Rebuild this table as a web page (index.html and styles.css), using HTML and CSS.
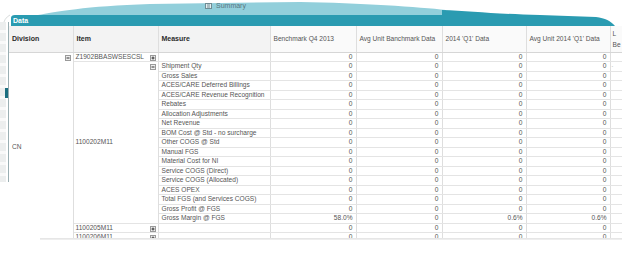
FILE: index.html
```html
<!DOCTYPE html>
<html>
<head>
<meta charset="utf-8">
<link rel="stylesheet" href="styles.css">
</head>
<body>
<div class="page">
  <div class="top">
    <svg class="curl" width="628" height="26" viewBox="0 0 628 26">
      <path class="band-light" d="M38 15 C55 12 85 6 150 4 L300 2 C360 3 420 7 446 10 L446 15 Z"/>
      <path class="band-dark" d="M11 26 L11 18 Q11 15 15 15 L442 15 L442 10 C470 11 495 14 540 15 L596 17 C605 18 611 21 615 26 Z"/>
      <path class="edge-curve" d="M3 26 Q4 18 10 15" />
    </svg>
    <div class="top-text">
      <div class="summary">
        <svg class="tab-ico" width="7" height="6" viewBox="0 0 7 6"><rect x="0.5" y="0.5" width="6" height="5" fill="#e4eef0" stroke="#6f8c93"/><path d="M2 2h3M2 4h3" stroke="#6f8c93"/></svg>
        <span>Summary</span>
      </div>
      <div class="data-title">Data</div>
    </div>
  </div>

  <div class="body">
    <div class="edge">
      <div class="edge-rail"><div class="edge-tab"></div></div>
    </div>
    <div class="clip">
      <table class="pivot">
        <colgroup>
          <col class="c-div"><col class="c-item"><col class="c-meas">
          <col class="c-v1"><col class="c-v2"><col class="c-v3"><col class="c-v4"><col class="c-x">
        </colgroup>
        <thead>
          <tr class="head">
            <th class="dim">Division</th>
            <th class="dim">Item</th>
            <th class="dim">Measure</th>
            <th class="expr">Benchmark Q4 2013</th>
            <th class="expr">Avg Unit Banchmark Data</th>
            <th class="expr">2014 'Q1' Data</th>
            <th class="expr">Avg Unit 2014 'Q1' Data</th>
            <th class="expr extra">L<br>Be</th>
          </tr>
        </thead>
        <tbody>
          <tr>
            <td class="division" rowspan="20"><span class="ico ico-min"><svg width="6" height="6" viewBox="0 0 6 6"><rect x="0.5" y="0.5" width="5" height="5" fill="#eee" stroke="#9a9a9a"/><path d="M1.5 3h3" stroke="#333"/></svg></span>CN</td>
            <td class="item"><span class="ico"><svg width="6" height="6" viewBox="0 0 6 6"><rect x="0.5" y="0.5" width="5" height="5" fill="#eee" stroke="#9a9a9a"/><path d="M1.5 3h3M3 1.5v3" stroke="#333"/></svg></span>Z1902BBASWSESCSL</td>
            <td class="meas"></td>
            <td class="num">0</td><td class="num">0</td><td class="num">0</td><td class="num">0</td><td class="x"></td>
          </tr>
          <tr>
            <td class="item" rowspan="17"><span class="ico"><svg width="6" height="6" viewBox="0 0 6 6"><rect x="0.5" y="0.5" width="5" height="5" fill="#eee" stroke="#9a9a9a"/><path d="M1.5 3h3" stroke="#333"/></svg></span>1100202M11</td>
            <td class="meas">Shipment Qty</td>
            <td class="num">0</td><td class="num">0</td><td class="num">0</td><td class="num">0</td><td class="x"><span class="dash">-</span></td>
          </tr>
          <tr><td class="meas">Gross Sales</td><td class="num">0</td><td class="num">0</td><td class="num">0</td><td class="num">0</td><td class="x"></td></tr>
          <tr><td class="meas">ACES/CARE Deferred Billings</td><td class="num">0</td><td class="num">0</td><td class="num">0</td><td class="num">0</td><td class="x"></td></tr>
          <tr><td class="meas">ACES/CARE Revenue Recognition</td><td class="num">0</td><td class="num">0</td><td class="num">0</td><td class="num">0</td><td class="x"></td></tr>
          <tr><td class="meas">Rebates</td><td class="num">0</td><td class="num">0</td><td class="num">0</td><td class="num">0</td><td class="x"></td></tr>
          <tr><td class="meas">Allocation Adjustments</td><td class="num">0</td><td class="num">0</td><td class="num">0</td><td class="num">0</td><td class="x"></td></tr>
          <tr><td class="meas">Net Revenue</td><td class="num">0</td><td class="num">0</td><td class="num">0</td><td class="num">0</td><td class="x"></td></tr>
          <tr><td class="meas">BOM Cost @ Std - no surcharge</td><td class="num">0</td><td class="num">0</td><td class="num">0</td><td class="num">0</td><td class="x"></td></tr>
          <tr><td class="meas">Other COGS @ Std</td><td class="num">0</td><td class="num">0</td><td class="num">0</td><td class="num">0</td><td class="x"></td></tr>
          <tr><td class="meas">Manual FGS</td><td class="num">0</td><td class="num">0</td><td class="num">0</td><td class="num">0</td><td class="x"></td></tr>
          <tr><td class="meas">Material Cost for NI</td><td class="num">0</td><td class="num">0</td><td class="num">0</td><td class="num">0</td><td class="x"></td></tr>
          <tr><td class="meas">Service COGS (Direct)</td><td class="num">0</td><td class="num">0</td><td class="num">0</td><td class="num">0</td><td class="x"></td></tr>
          <tr><td class="meas">Service COGS (Allocated)</td><td class="num">0</td><td class="num">0</td><td class="num">0</td><td class="num">0</td><td class="x"></td></tr>
          <tr><td class="meas">ACES OPEX</td><td class="num">0</td><td class="num">0</td><td class="num">0</td><td class="num">0</td><td class="x"></td></tr>
          <tr><td class="meas">Total FGS (and Services COGS)</td><td class="num">0</td><td class="num">0</td><td class="num">0</td><td class="num">0</td><td class="x"></td></tr>
          <tr><td class="meas">Gross Profit @ FGS</td><td class="num">0</td><td class="num">0</td><td class="num">0</td><td class="num">0</td><td class="x"></td></tr>
          <tr><td class="meas">Gross Margin @ FGS</td><td class="num">58.0%</td><td class="num">0</td><td class="num">0.6%</td><td class="num">0.6%</td><td class="x"></td></tr>
          <tr>
            <td class="item"><span class="ico"><svg width="6" height="6" viewBox="0 0 6 6"><rect x="0.5" y="0.5" width="5" height="5" fill="#eee" stroke="#9a9a9a"/><path d="M1.5 3h3M3 1.5v3" stroke="#333"/></svg></span>1100205M11</td>
            <td class="meas"></td>
            <td class="num">0</td><td class="num">0</td><td class="num">0</td><td class="num">0</td><td class="x"></td>
          </tr>
          <tr>
            <td class="item"><span class="ico"><svg width="6" height="6" viewBox="0 0 6 6"><rect x="0.5" y="0.5" width="5" height="5" fill="#eee" stroke="#9a9a9a"/><path d="M1.5 3h3M3 1.5v3" stroke="#333"/></svg></span>1100206M11</td>
            <td class="meas"></td>
            <td class="num">0</td><td class="num">0</td><td class="num">0</td><td class="num">0</td><td class="x"></td>
          </tr>
        </tbody>
      </table>
    </div>
  </div>
  <div class="shadow"></div>
</div>
</body>
</html>
```

FILE: styles.css
```css
html, body {
  margin: 0;
  padding: 0;
  background: #ffffff;
}

body {
  width: 628px;
  height: 264px;
  overflow: hidden;
  font-family: "Liberation Sans", Arial, sans-serif;
}

.page {
  display: flex;
  flex-direction: column;
}

/* top curled tab band */
.top {
  display: grid;
  height: 26px;
}

.top > * {
  grid-area: 1 / 1;
}

.curl {
  display: block;
}

.band-light {
  fill: #92cfdb;
}

.band-dark {
  fill: #2a9bb1;
}

.edge-curve {
  fill: none;
  stroke: #d8dcdc;
  stroke-width: 1;
}

.top-text {
  display: flex;
  flex-direction: column;
}

.summary {
  height: 11px;
  padding-left: 205px;
  display: flex;
  align-items: center;
  gap: 4px;
  font-size: 7px;
  color: #58777f;
}

.tab-ico {
  display: block;
}

.data-title {
  margin-top: 4px;
  height: 11px;
  line-height: 11px;
  padding-left: 13px;
  font-size: 7px;
  font-weight: bold;
  color: #ffffff;
}

/* body */
.body {
  display: flex;
  height: 212px;
}

.edge {
  width: 9px;
  flex: none;
  display: flex;
  flex-direction: column;
}

.edge-rail {
  margin-top: -4px;
  height: 160px;
  box-sizing: border-box;
  border-right: 1px solid #9aaeb2;
  background: repeating-linear-gradient(to bottom, #eceeee 0 8px, #f9f9f9 8px 11px);
  background-size: 6px 100%;
  background-repeat: no-repeat;
  display: flex;
  flex-direction: column;
}

.edge-tab {
  margin: 66px 0 0 5px;
  width: 3px;
  height: 10px;
  background: #1b6e7f;
}

.clip {
  width: 613px;
  height: 212px;
  overflow: hidden;
  flex: none;
}

.pivot {
  width: 613px;
  table-layout: fixed;
  border-collapse: collapse;
  font-size: 6.6px;
  color: #555;
}

.c-div { width: 64px; }
.c-item { width: 85px; }
.c-meas { width: 112px; }
.c-v1 { width: 86px; }
.c-v2 { width: 86px; }
.c-v3 { width: 84px; }
.c-v4 { width: 84px; }
.c-x { width: 12px; }

.pivot th,
.pivot td {
  padding: 0 3px;
  white-space: nowrap;
  overflow: hidden;
  border-right: 1px solid #dedede;
}

.head {
  height: 26px;
}

.head th {
  border-bottom: 1px solid #d6d6d6;
  vertical-align: middle;
  text-align: left;
}

.head .dim {
  background: #f3f3f3;
  font-weight: bold;
  font-size: 7px;
  color: #2b2b2b;
}

.head .expr {
  background: #fafafa;
  font-weight: normal;
  color: #555;
}

.head .extra {
  line-height: 11px;
  padding: 0 0 0 2px;
  border-right: none;
}

.pivot tbody tr {
  height: 9.5px;
}

.pivot tbody td {
  line-height: 8px;
  border-bottom: 1px solid #e4e4e4;
  vertical-align: middle;
}

.pivot td.division {
  position: relative;
  border-bottom: none;
  padding-left: 3px;
  color: #555;
}

.pivot td.item {
  position: relative;
  padding-left: 2px;
}

.ico {
  position: absolute;
  right: 2px;
  top: 2px;
  display: block;
  line-height: 0;
}

.ico svg {
  display: block;
}

.meas {
  padding-left: 3px;
}

.num {
  text-align: right;
}

.pivot td.x {
  border-right: none;
  padding: 0 0 0 1px;
}

.dash {
  color: #aaa;
  font-size: 5px;
}

.shadow {
  margin-left: 40px;
  width: 582px;
  height: 2px;
  background: linear-gradient(to bottom, #e2e2e2, #f2f2f2);
}
```
